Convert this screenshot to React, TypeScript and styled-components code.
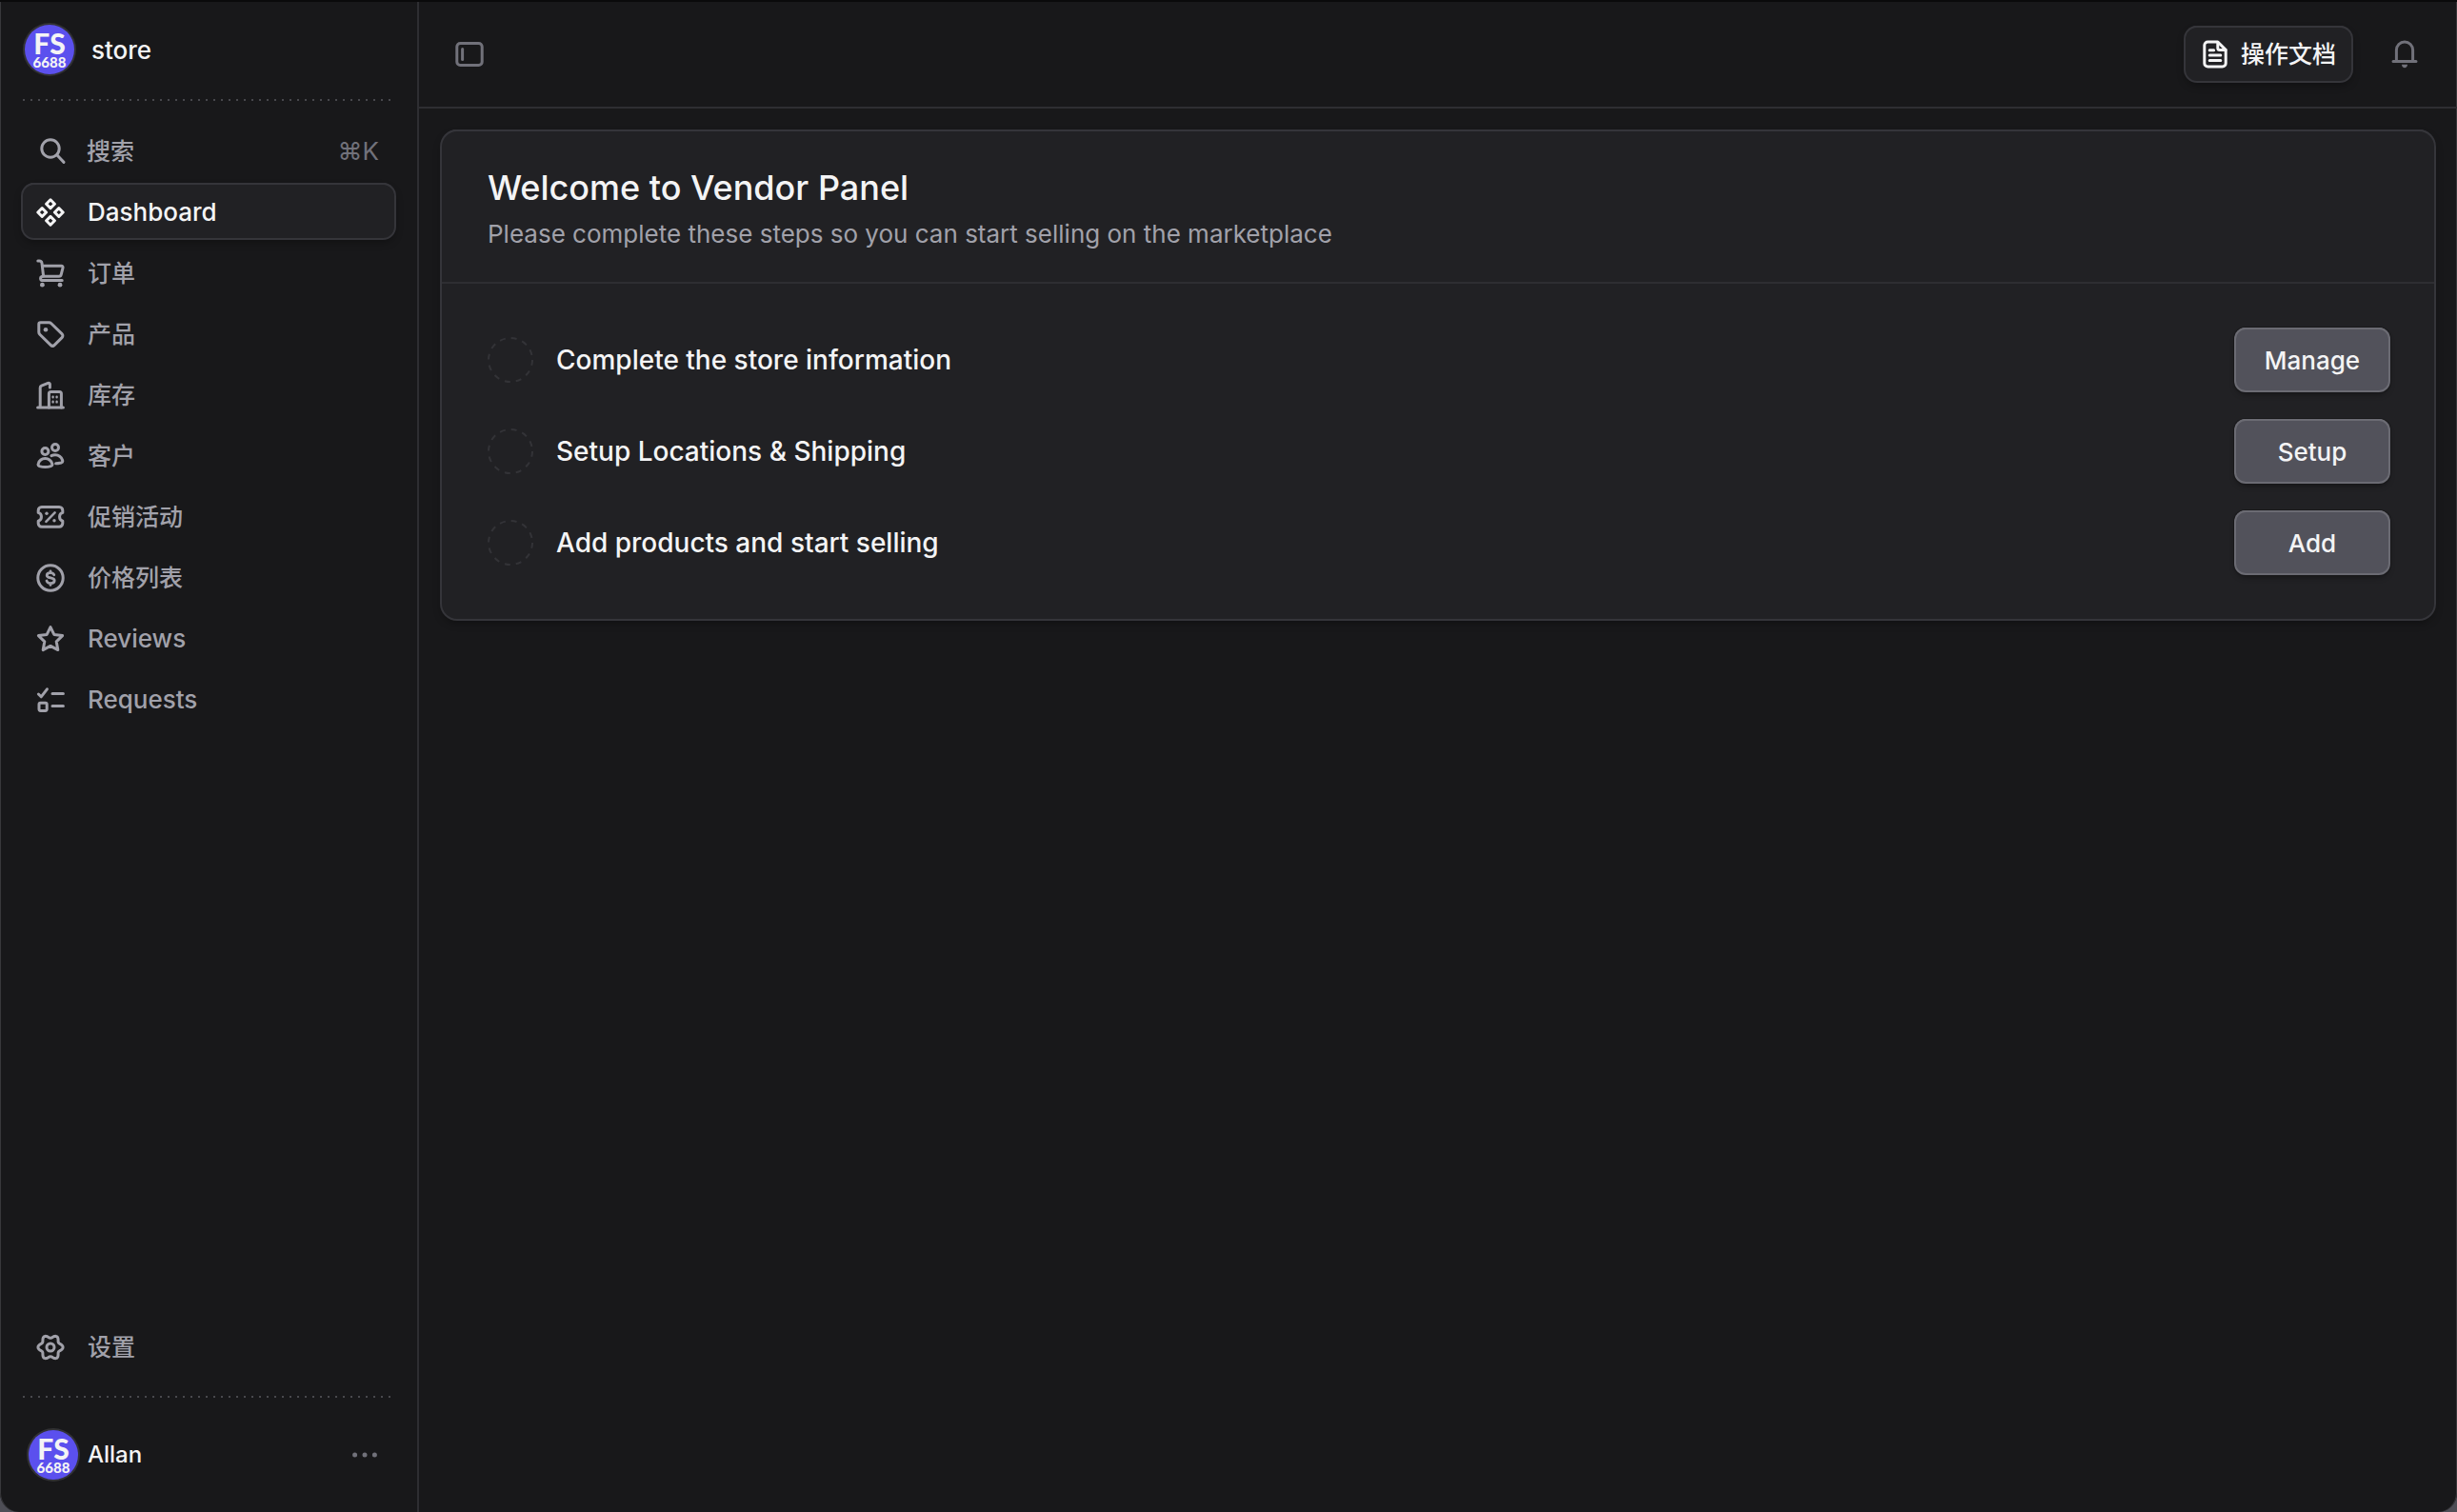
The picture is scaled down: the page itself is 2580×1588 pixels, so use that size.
import React from "react";
import styled, { createGlobalStyle, css } from "styled-components";

const color = {
  base: "#18181a",
  component: "#212124",
  line: "#2e2e32",
  ring: "#35353a",
  ringTop: "#414146",
  text: "#f4f4f5",
  subtle: "#a1a1aa",
  muted: "#71717a",
};

const GlobalStyle = createGlobalStyle`
  *, *::before, *::after { box-sizing: border-box; }
  body {
    margin: 0;
    background: #4e4e56;
    color: ${color.text};
    font-family: Inter, "Noto Sans CJK SC", sans-serif;
    font-size: 26px;
    line-height: 40px;
    -webkit-font-smoothing: antialiased;
  }
  button { font: inherit; color: inherit; cursor: pointer; }
  h1, p, ul { margin: 0; padding: 0; }
  svg { display: block; flex: none; }
`;

const raised = css`
  background: ${color.component};
  box-shadow: 0 0 0 2px ${color.ring}, 0 -1px 0 1px ${color.ringTop}, 0 4px 8px rgba(0, 0, 0, 0.35);
`;

const Shell = styled.div`
  display: grid;
  grid-template-columns: 440px 1fr;
  min-height: 100vh;
  background: ${color.base};
  border-top: 2px solid #0a0a0b;
  border-radius: 0 0 20px 20px;
  box-shadow: inset 1px 0 0 #38383b, inset -1px 0 0 #38383b;
`;

const Sidebar = styled.aside`
  display: flex;
  flex-direction: column;
  border-right: 2px solid ${color.line};
`;

const StoreHeader = styled.div`
  display: flex;
  align-items: center;
  gap: 18px;
  height: 102px;
  padding: 0 24px 2px 26px;
`;

const DottedRule = styled.hr`
  width: 388px;
  height: 2px;
  margin: 0 0 0 24px;
  border: 0;
  background: repeating-linear-gradient(90deg, #48484d 0 2px, transparent 2px 8px);
`;

const AvatarCircle = styled.span`
  display: flex;
  flex-direction: column;
  align-items: center;
  justify-content: center;
  flex: none;
  width: 52px;
  height: 52px;
  border-radius: 50%;
  background: #5b50ee;
  box-shadow: 0 0 0 2px #323236;
  color: ${color.text};
  font-family: Lato, sans-serif;
  font-weight: 900;
`;

const AvatarTop = styled.span`
  font-size: 30px;
  line-height: 26px;
`;

const AvatarBottom = styled.span`
  font-size: 15px;
  line-height: 14px;
`;

const Nav = styled.nav`
  display: flex;
  flex-direction: column;
  gap: 8px;
  padding: 24px;
`;

const navRow = css`
  display: flex;
  align-items: center;
  height: 56px;
  padding: 2px 16px 0 14px;
  border: 0;
  border-radius: 12px;
  background: none;
  color: ${color.subtle};
  font-weight: 500;
  text-decoration: none;
`;

const SearchButton = styled.button`
  ${navRow}
  gap: 21px;
  padding-left: 16px;
`;

const NavLink = styled.a<{ $active?: boolean }>`
  ${navRow}
  gap: 24px;
  ${(p) => p.$active && css`
    ${raised}
    color: ${color.text};
  `}
`;

const Label = styled.span<{ $cjk?: boolean }>`
  font-size: ${(p) => (p.$cjk ? 25 : 26)}px;
`;

const StoreName = styled.span`
  padding-top: 2px;
  font-weight: 500;
`;

const Shortcut = styled.kbd`
  margin-left: auto;
  color: ${color.muted};
  font-family: Inter, "DejaVu Sans", sans-serif;
  font-size: 26px;
  font-weight: 400;
`;

const SidebarFooter = styled.div`
  margin-top: auto;
`;

const UserButton = styled.button`
  display: flex;
  align-items: center;
  gap: 10px;
  width: 100%;
  height: 120px;
  padding: 0 40px 0 30px;
  border: 0;
  background: none;
  font-size: 24px;
  font-weight: 500;

  svg { margin-left: auto; color: ${color.muted}; }
`;

const Main = styled.main`
  display: flex;
  flex-direction: column;
  min-width: 0;
`;

const Topbar = styled.header`
  display: flex;
  align-items: center;
  gap: 28px;
  height: 112px;
  padding: 0 27px 0 25px;
  border-bottom: 2px solid ${color.line};
`;

const IconButton = styled.button`
  display: grid;
  place-items: center;
  width: 56px;
  height: 56px;
  padding: 0;
  border: 0;
  background: none;
  color: ${color.muted};

  &:first-child { margin-right: auto; }
`;

const DocsButton = styled.button`
  ${raised}
  display: flex;
  align-items: center;
  gap: 12px;
  height: 56px;
  padding: 0 16px;
  border: 0;
  border-radius: 12px;
  font-weight: 500;
`;

const Content = styled.div`
  padding: 24px;
`;

const Card = styled.section`
  ${raised}
  border-radius: 16px;
`;

const CardHeader = styled.div`
  padding: 32px 48px 30px;
  border-bottom: 2px solid ${color.line};
`;

const Title = styled.h1`
  font-size: 36px;
  line-height: 54px;
  font-weight: 500;
`;

const Subtitle = styled.p`
  padding-top: 2px;
  color: ${color.subtle};
  font-weight: 400;
`;

const Steps = styled.ul`
  display: flex;
  flex-direction: column;
  gap: 32px;
  padding: 48px;
  list-style: none;
`;

const Step = styled.li`
  display: flex;
  align-items: center;
  gap: 24px;
  font-size: 28px;
  font-weight: 500;
`;

const StepButton = styled.button`
  width: 160px;
  height: 64px;
  margin-left: auto;
  padding: 2px 0 0;
  border: 0;
  border-radius: 10px;
  background: #52525b;
  box-shadow: 0 0 0 2px #6b6b73, 0 -1px 0 1px #7b7b82, 0 0 0 3px #18181a, 0 4px 6px rgba(0, 0, 0, 0.4);
  font-size: 26px;
  font-weight: 500;
`;

function Icon({ children }: { children: React.ReactNode }) {
  return (
    <svg width="30" height="30" viewBox="0 0 15 15" fill="none" stroke="currentColor" strokeWidth="1.5" strokeLinecap="round" strokeLinejoin="round" aria-hidden="true">
      {children}
    </svg>
  );
}

function Dot({ x, y, r = 1 }: { x: number; y: number; r?: number }) {
  return <circle cx={x} cy={y} r={r} fill="currentColor" stroke="none" />;
}

// Six-lobed cog outline sampled around its centre.
const cogOutline =
  Array.from({ length: 72 }, (_, i) => {
    const t = (i * Math.PI) / 36;
    const r = 5.7 + 0.85 * Math.cos(6 * t);
    return `${i ? "L" : "M"}${(7.5 + r * Math.cos(t)).toFixed(2)} ${(7.5 + r * Math.sin(t)).toFixed(2)}`;
  }).join("") + "Z";

const icons = {
  search: (
    <Icon><circle cx="6.5" cy="6" r="4.6" /><path d="M9.9 9.4l3.6 3.8" /></Icon>
  ),
  dashboard: (
    <Icon>
      {[[7.5, 3.1], [3.1, 7.5], [11.9, 7.5], [7.5, 11.9]].map(([x, y]) => (
        <path key={`${x}-${y}`} d={`M${x} ${y - 2.2}l2.2 2.2-2.2 2.2-2.2-2.2z`} />
      ))}
    </Icon>
  ),
  orders: (
    <Icon>
      <path d="M.9 1h.7c.8 0 1.3.5 1.4 1.2L3.8 9" />
      <path d="M3.3 3.6h9.9c.6 0 1 .5.8 1.1l-.9 3.5c-.1.5-.6.9-1.1.9H3.7c-.8 0-1.4.5-1.4 1.1s.5 1.1 1.2 1.1h10.1" />
      <Dot x={3.2} y={13.6} r={1.2} /><Dot x={12.5} y={13.6} r={1.2} />
    </Icon>
  ),
  products: (
    <Icon>
      <path d="M2.3 1.4h4.4c.5 0 .9.2 1.2.5l5.6 5.4c.6.6.6 1.4 0 2l-3.9 3.9c-.6.6-1.4.6-2 0L1.9 7.6c-.3-.3-.5-.7-.5-1.1V2.3c0-.5.4-.9.9-.9z" />
      <Dot x={5} y={5.1} r={1.15} />
    </Icon>
  ),
  inventory: (
    <Icon>
      <path d="M.8 14h13.4M2.1 14V3.6c0-.5.2-.8.7-1L6.2 1.2c.6-.2 1 .1 1 .6v1.7" />
      <path d="M6.7 14V6.8c0-.6.4-1 1-1h4.5c.6 0 1 .4 1 1V14" />
      <path strokeWidth="1.2" d="M8.8 8.3v.3M10.8 8.3v.3M8.8 10.9v.3M10.8 10.9v.3" />
    </Icon>
  ),
  customers: (
    <Icon>
      <circle cx="4.7" cy="5" r="1.75" /><circle cx="10" cy="3" r="1.75" />
      <path d="M1.1 11.6c.5-1.7 1.9-2.8 3.6-2.8s3.1 1.1 3.7 2.8c.2.6-.1 1-.7 1.2-1.9.6-4.1.6-6 0-.5-.2-.8-.6-.6-1.2z" />
      <path d="M8 7.3c.6-.3 1.3-.4 2-.4 1.8 0 3.2 1.2 3.8 2.8.2.6-.1 1.1-.7 1.3-.9.2-1.8.4-2.8.4" />
    </Icon>
  ),
  promotions: (
    <Icon>
      <path d="M1.1 4.1c0-1 .7-1.8 1.8-1.8h9.2c1.1 0 1.8.8 1.8 1.8v1.1a2.3 2.3 0 0 0 0 4.4v1.2c0 1-.7 1.8-1.8 1.8H2.9c-1.1 0-1.8-.8-1.8-1.8V9.6a2.3 2.3 0 0 0 0-4.4z" />
      <path strokeWidth="1.3" d="M5.2 9.9l4.6-4.7" />
      <Dot x={5.5} y={5.6} r={0.85} /><Dot x={9.5} y={9.4} r={0.85} />
    </Icon>
  ),
  prices: (
    <Icon>
      <circle cx="7.5" cy="7.5" r="6.6" />
      <path strokeWidth="1.4" d="M9.4 5.9C9.1 5.2 8.4 4.8 7.5 4.8c-1.1 0-1.9.5-1.9 1.3 0 1.9 4 .8 4 2.8 0 .9-.9 1.4-2 1.4s-1.9-.5-2.1-1.3M7.5 3.9v.9M7.5 10.3v.9" />
    </Icon>
  ),
  reviews: (
    <Icon>
      <path d="M7.5 1.3l1.9 3.9 4.4.6-3.2 3.1.8 4.4-3.9-2.1-3.9 2.1.8-4.4L1.2 5.8l4.4-.6z" />
    </Icon>
  ),
  requests: (
    <Icon>
      <path d="M1.2 4.5l1.4 1.4 3.1-4M8.5 4.2h5.7M8.5 10.8h5.7" />
      <rect x="1.5" y="9.1" width="4.1" height="4.1" rx="0.8" />
    </Icon>
  ),
  settings: (
    <Icon><path d={cogOutline} /><circle cx="7.5" cy="7.5" r="2" /></Icon>
  ),
  sidebar: (
    <Icon><rect x="0.9" y="1.7" width="13.2" height="11.6" rx="1.8" /><path d="M3.8 4.8v5.4" /></Icon>
  ),
  docs: (
    <Icon>
      <path d="M8.9 1H3.7c-1 0-1.8.8-1.8 1.8v9.4c0 1 .8 1.8 1.8 1.8h7.6c1 0 1.8-.8 1.8-1.8V5.2z" />
      <path d="M8.9 1.2v3c0 .6.4 1 1 1H13M4.6 5.4h2.2M4.6 8h5.8M4.6 10.7h5.8" />
    </Icon>
  ),
  bell: (
    <Icon>
      <path d="M1.5 11.3h12M3.2 11.3V5.3a4.3 4.3 0 0 1 8.6 0v6" />
      <path d="M6 12.9h3c0 1-.7 1.7-1.5 1.7S6 13.9 6 12.9z" fill="currentColor" stroke="none" />
    </Icon>
  ),
  more: (
    <Icon><Dot x={2.3} y={7.5} r={1.25} /><Dot x={7.5} y={7.5} r={1.25} /><Dot x={12.7} y={7.5} r={1.25} /></Icon>
  ),
};

const links: { label: string; icon: keyof typeof icons; cjk?: boolean; active?: boolean }[] = [
  { label: "Dashboard", icon: "dashboard", active: true },
  { label: "订单", icon: "orders", cjk: true },
  { label: "产品", icon: "products", cjk: true },
  { label: "库存", icon: "inventory", cjk: true },
  { label: "客户", icon: "customers", cjk: true },
  { label: "促销活动", icon: "promotions", cjk: true },
  { label: "价格列表", icon: "prices", cjk: true },
  { label: "Reviews", icon: "reviews" },
  { label: "Requests", icon: "requests" },
];

const steps = [
  { label: "Complete the store information", action: "Manage" },
  { label: "Setup Locations & Shipping", action: "Setup" },
  { label: "Add products and start selling", action: "Add" },
];

function Avatar() {
  return (
    <AvatarCircle>
      <AvatarTop>FS</AvatarTop>
      <AvatarBottom>6688</AvatarBottom>
    </AvatarCircle>
  );
}

function StepMarker() {
  return (
    <svg width="48" height="48" viewBox="0 0 48 48" fill="none" aria-hidden="true">
      <circle cx="24" cy="24" r="23" stroke="#333337" strokeWidth="2" strokeDasharray="6 6.042" />
    </svg>
  );
}

export default function App() {
  return (
    <>
      <GlobalStyle />
      <Shell>
        <Sidebar>
          <StoreHeader><Avatar /><StoreName>store</StoreName></StoreHeader>
          <DottedRule />
          <Nav>
            <SearchButton type="button">
              {icons.search}
              <Label $cjk>搜索</Label>
              <Shortcut>⌘K</Shortcut>
            </SearchButton>
            {links.map((link) => (
              <NavLink key={link.label} href="#" $active={link.active}>
                {icons[link.icon]}
                <Label $cjk={link.cjk}>{link.label}</Label>
              </NavLink>
            ))}
          </Nav>
          <SidebarFooter>
            <Nav>
              <NavLink href="#">
                {icons.settings}
                <Label $cjk>设置</Label>
              </NavLink>
            </Nav>
            <DottedRule />
            <UserButton type="button"><Avatar />Allan{icons.more}</UserButton>
          </SidebarFooter>
        </Sidebar>
        <Main>
          <Topbar>
            <IconButton type="button" aria-label="Toggle sidebar">{icons.sidebar}</IconButton>
            <DocsButton type="button">{icons.docs}<Label $cjk>操作文档</Label></DocsButton>
            <IconButton type="button" aria-label="Notifications">{icons.bell}</IconButton>
          </Topbar>
          <Content>
            <Card>
              <CardHeader>
                <Title>Welcome to Vendor Panel</Title>
                <Subtitle>Please complete these steps so you can start selling on the marketplace</Subtitle>
              </CardHeader>
              <Steps>
                {steps.map((step) => (
                  <Step key={step.label}>
                    <StepMarker />
                    {step.label}
                    <StepButton type="button">{step.action}</StepButton>
                  </Step>
                ))}
              </Steps>
            </Card>
          </Content>
        </Main>
      </Shell>
    </>
  );
}
